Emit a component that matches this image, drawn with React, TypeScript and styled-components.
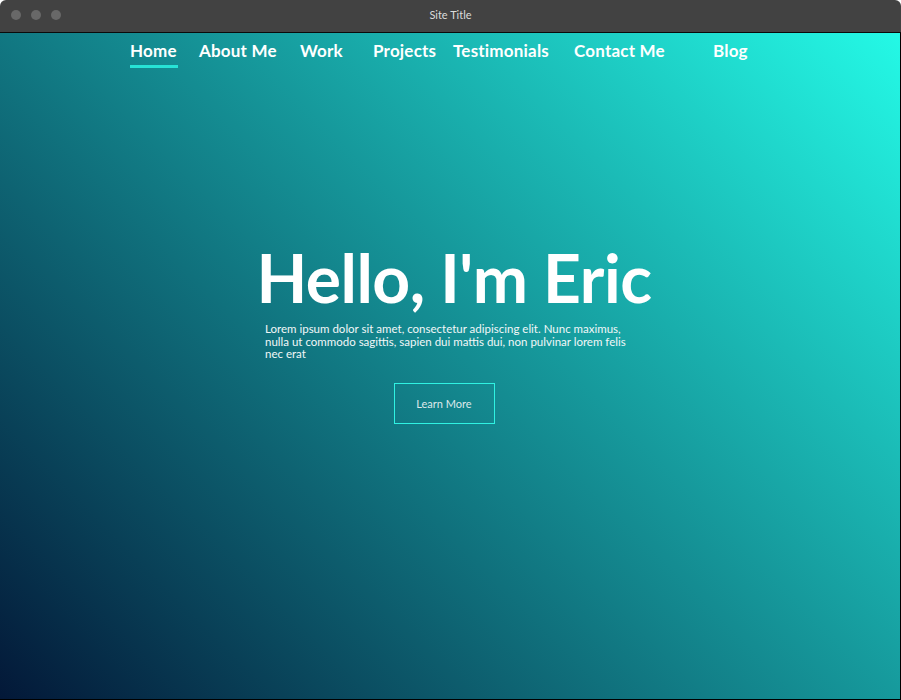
import React from "react";
import styled, { createGlobalStyle } from "styled-components";

const Global = createGlobalStyle`
  html, body { margin: 0; padding: 0; background: #ffffff; }
  body { font-family: Lato, "Noto Sans", sans-serif; }
  * { box-sizing: border-box; }
`;

const Window = styled.div`
  width: 901px;
  height: 700px;
  display: flex;
  flex-direction: column;
  border-radius: 6px 6px 0 0;
  overflow: hidden;
`;

const TitleBar = styled.div`
  height: 33px;
  flex: none;
  background: #424242;
  border-bottom: 1px solid #0a0a0a;
  display: flex;
  align-items: center;
  position: relative;
  padding: 0 0 2px 11px;
`;

const Dots = styled.div`
  display: flex;
  gap: 10px;
`;

const Dot = styled.span`
  width: 10px;
  height: 10px;
  border-radius: 50%;
  background: #686868;
`;

const WindowTitle = styled.div`
  position: absolute;
  left: 0;
  right: 0;
  top: 8px;
  text-align: center;
  font-size: 11px;
  color: #dcdcdc;
  font-family: Lato, sans-serif;
`;

const Hero = styled.main`
  flex: 1;
  background: linear-gradient(45deg, #031838 0%, #24f9e6 100%);
  border-right: 1px solid #000;
  border-bottom: 1px solid #000;
  display: flex;
  flex-direction: column;
`;

const Nav = styled.nav`
  display: grid;
  grid-template-columns: 69px 101px 73px 80px 121px 139px auto;
  padding: 8px 0 0 130px;
`;

const NavLink = styled.a<{ $active?: boolean }>`
  justify-self: start;
  color: #ffffff;
  font-weight: 700;
  font-size: 17px;
  line-height: 20px;
  text-decoration: none;
  padding: 0 1px 4px 0;
  letter-spacing: 0.2px;
  border-bottom: 3px solid ${(p) => (p.$active ? "#27e3d6" : "transparent")};
`;

const Content = styled.section`
  width: 378px;
  margin: 170px 0 0 265px;
  display: flex;
  flex-direction: column;
  align-items: center;
`;

const Heading = styled.h1`
  margin: 0;
  white-space: nowrap;
  color: #ffffff;
  font-size: 66px;
  font-weight: 700;
  line-height: 80px;
  letter-spacing: -0.5px;
`;

const Lead = styled.p`
  margin: 5px 0 0;
  color: #f2f7f8;
  font-size: 11.5px;
  line-height: 12.5px;
  align-self: stretch;
`;

const Button = styled.a`
  margin: 22px 20px 0 0;
  width: 101px;
  height: 41px;
  border: 1px solid #2ff2e2;
  display: flex;
  align-items: center;
  justify-content: center;
  color: #dde8ea;
  font-size: 11px;
  text-decoration: none;
`;

const links = ["Home", "About Me", "Work", "Projects", "Testimonials", "Contact Me", "Blog"];

export default function App() {
  return (
    <>
      <Global />
      <Window>
        <TitleBar>
          <Dots>
            <Dot />
            <Dot />
            <Dot />
          </Dots>
          <WindowTitle>Site Title</WindowTitle>
        </TitleBar>
        <Hero>
          <Nav>
            {links.map((l, i) => (
              <NavLink key={l} href="#" $active={i === 0}>
                {l}
              </NavLink>
            ))}
          </Nav>
          <Content>
            <Heading>Hello, I'm Eric</Heading>
            <Lead>
              Lorem ipsum dolor sit amet, consectetur adipiscing elit. Nunc maximus, nulla ut commodo sagittis,
              sapien dui mattis dui, non pulvinar lorem felis nec erat
            </Lead>
            <Button href="#">Learn More</Button>
          </Content>
        </Hero>
      </Window>
    </>
  );
}
